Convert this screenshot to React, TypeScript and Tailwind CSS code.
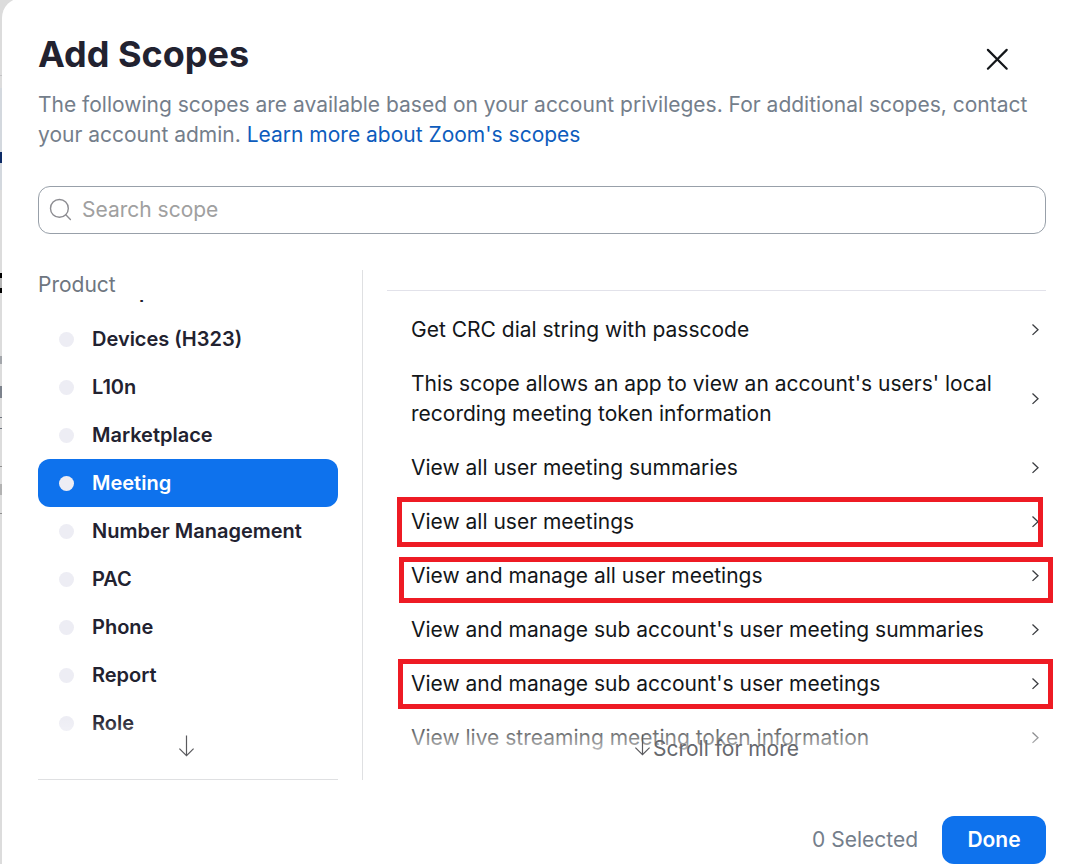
import React from "react";

const products = [
  "Group",
  "Devices (H323)",
  "L10n",
  "Marketplace",
  "Meeting",
  "Number Management",
  "PAC",
  "Phone",
  "Report",
  "Role",
];

type Scope = { name: string; mark?: string };

const scopes: Scope[] = [
  { name: "Get CRC dial string with passcode" },
  { name: "This scope allows an app to view an account's users' local recording meeting token information" },
  { name: "View all user meeting summaries" },
  { name: "View all user meetings", mark: "left-[10px] right-[3px] top-[2px] h-[50px]" },
  { name: "View and manage all user meetings", mark: "left-3 -right-[7px] top-2 h-[46px]" },
  { name: "View and manage sub account's user meeting summaries" },
  { name: "View and manage sub account's user meetings", mark: "left-[11px] -right-[7px] top-[2px] h-[50px]" },
  { name: "View live streaming meeting token information" },
];

function CloseIcon() {
  return (
    <svg width="24" height="24" viewBox="0 0 24 24" fill="none" stroke="#131619" strokeWidth="2.2" strokeLinecap="round" aria-hidden="true">
      <path d="M2.9 2.9 21.7 21.7M21.7 2.9 2.9 21.7" />
    </svg>
  );
}

function SearchIcon() {
  return (
    <svg width="24" height="24" viewBox="0 0 24 24" fill="none" stroke="#8d8d92" strokeWidth="1.4" strokeLinecap="round" aria-hidden="true">
      <circle cx="10.4" cy="10.4" r="8.9" />
      <path d="m16.8 16.8 4.6 4.6" />
    </svg>
  );
}

function DownArrow() {
  return (
    <svg width="16" height="22" viewBox="0 0 16 22" fill="none" stroke="#5a5a5e" strokeWidth="1.2" aria-hidden="true">
      <path d="M8.5 .5v20.4M1.4 13.6 8.5 20.7l7.1-7.1" />
    </svg>
  );
}

function Chevron() {
  return (
    <svg width="8" height="12" viewBox="0 0 8 12" fill="none" stroke="#3a3c40" strokeWidth="1.3" aria-hidden="true">
      <path d="m1.5 .5 5.5 5.2-5.5 5.2" />
    </svg>
  );
}

function PageEdge() {
  return (
    <div aria-hidden="true" className="flex w-[2px] shrink-0 flex-col bg-[#dcdcdc]">
      <div className="h-[75px]" />
      <div className="h-px bg-[#c4c4c6]" />
      <div className="h-3" />
      <div className="h-16 bg-[#d3d8de]" />
      <div className="h-[11px] bg-[#0c2a66]" />
      <div className="h-[27px] bg-[#d3d8de]" />
      <div className="h-[83px]" />
      <div className="h-[5px] bg-black" />
      <div className="h-[10px] bg-[#b5b5b5]" />
      <div className="h-[5px] bg-black" />
      <div className="h-[63px]" />
      <div className="h-2 bg-[#a3a6ab]" />
      <div className="h-[22px]" />
      <div className="h-3 bg-[#7c828c]" />
      <div className="h-[19px]" />
      <div className="h-px bg-[#6e747e]" />
      <div className="h-[10px]" />
      <div className="h-px bg-[#6e747e]" />
      <div className="h-[37px]" />
      <div className="h-px bg-[#909090]" />
      <div className="h-[17px]" />
      <div className="h-[11px] bg-[#b2b2b2]" />
      <div className="h-[18px]" />
      <div className="h-px bg-[#909090]" />
    </div>
  );
}

export default function App() {
  return (
    <div className="flex min-h-screen overflow-hidden bg-[#dcdcdc] font-['Inter',sans-serif] text-[21px] leading-[30px] text-[#131619]">
      <PageEdge />
      <main role="dialog" aria-labelledby="title" className="-mt-[2px] min-w-0 flex-1 rounded-tl-[20px] bg-white pl-9 pr-[19px] pt-8">
        <header>
          <div className="flex items-center justify-between">
            <h1 id="title" className="text-4xl font-bold leading-[48px] text-[#222230]">Add Scopes</h1>
            <button type="button" aria-label="Close" className="mr-[37px] mt-[10px]">
              <CloseIcon />
            </button>
          </div>
          <p className="mt-3 text-[#747e8b]">
            The following scopes are available based on your account privileges. For additional scopes, contact your account admin.{" "}
            <a href="#scopes" className="text-[#0d5cbd]">Learn more about Zoom's scopes</a>
          </p>
        </header>

        <label className="mt-9 flex h-12 items-center gap-[9px] rounded-xl border border-[#98a0a9] pl-[10px] pr-3">
          <SearchIcon />
          <input type="text" aria-label="Search scope" placeholder="Search scope" className="min-w-0 flex-1 bg-transparent outline-none placeholder:text-[#a0a0a0]" />
        </label>

        <div className="mt-9 flex h-[510px]">
          <nav aria-labelledby="product" className="flex w-[300px] shrink-0 flex-col border-b border-[#dfe0e2]">
            <h2 id="product" className="text-[#6e7680]">Product</h2>
            <div className="relative min-h-0 flex-1 overflow-hidden">
              <ul className="-mt-[33px]">
                {products.map((name) => (
                  <li key={name}>
                    <button
                      type="button"
                      className={
                        name === "Meeting"
                          ? "flex h-12 w-full items-center gap-[18px] rounded-xl bg-[#0e72ed] pl-[21px] text-xl font-semibold text-white"
                          : "flex h-12 w-full items-center gap-[18px] rounded-xl pl-[21px] text-xl font-semibold text-[#222230]"
                      }
                    >
                      <span className="size-[15px] rounded-full bg-[#ededf4]" />
                      {name}
                    </button>
                  </li>
                ))}
              </ul>
              <div className="absolute inset-x-0 bottom-0 flex h-16 justify-center bg-linear-to-b from-transparent from-5% to-white to-100% pr-1 pt-5">
                <DownArrow />
              </div>
            </div>
          </nav>

          <section aria-label="Scopes" className="ml-6 flex min-w-0 flex-1 border-l border-[#dfe0e2] pl-6 pt-5">
            <div className="relative min-w-0 flex-1 border-t border-[#e2e2ea] pt-3">
              <ul>
                {scopes.map((scope) => (
                  <li key={scope.name} className="relative">
                    <button type="button" className="flex w-full items-center justify-between gap-9 py-3 pl-6 pr-[7px] text-left">
                      <span>{scope.name}</span>
                      <span className="shrink-0">
                        <Chevron />
                      </span>
                    </button>
                    {scope.mark && <span className={`pointer-events-none absolute border-5 border-[#ee1b24] ${scope.mark}`} />}
                  </li>
                ))}
              </ul>
              <div className="absolute inset-x-0 bottom-0 flex h-[68px] items-start justify-center bg-linear-to-b from-transparent to-white to-80% pt-[22px] text-[#66686d]">
                <span className="flex gap-[3px]">
                  <DownArrow />
                  <span>Scroll for more</span>
                </span>
              </div>
            </div>
          </section>
        </div>

        <footer className="mt-9 flex items-center justify-end gap-6">
          <span className="text-[#747e8b]">0 Selected</span>
          <button type="button" className="h-12 min-w-[104px] rounded-xl bg-[#0e72ed] px-6 font-semibold text-white">Done</button>
        </footer>
      </main>
    </div>
  );
}
